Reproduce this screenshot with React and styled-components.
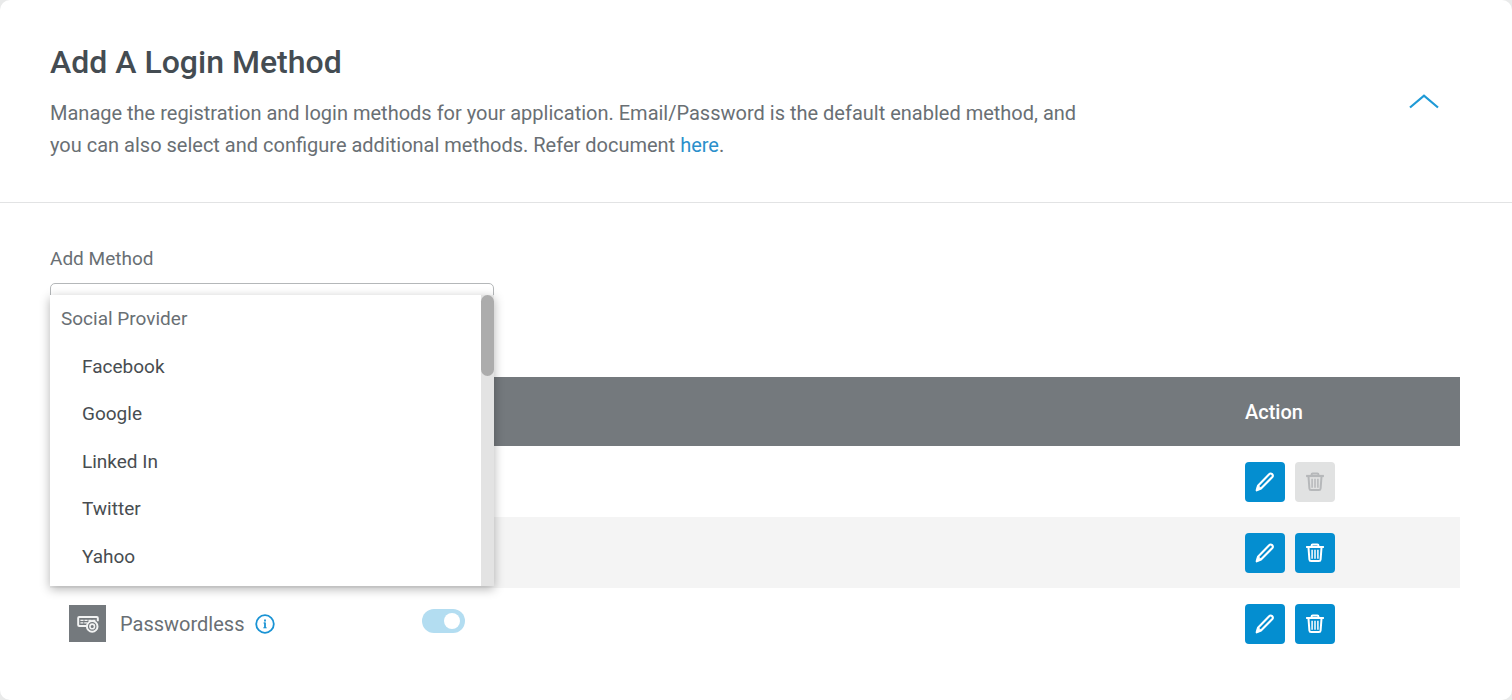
import React, { useState } from 'react';
import styled, { createGlobalStyle } from 'styled-components';

const GlobalStyle = createGlobalStyle`
  *, *::before, *::after { box-sizing: border-box; }
  body {
    margin: 0;
    background: #e9eaea;
    color: #696f74;
    font-family: Roboto, "Liberation Sans", sans-serif;
    font-size: 20px;
    line-height: 32px;
  }
  button, select { font: inherit; color: inherit; }
`;

const Card = styled.main`
  min-height: 100vh;
  background: #fff;
  border-radius: 10px;
  overflow: hidden;
`;

const CardHeader = styled.header`
  display: flex;
  justify-content: space-between;
  align-items: center;
  padding: 42px 72px 41px 50px;
  border-bottom: 1px solid #e2e3e4;
`;

const Intro = styled.div`
  max-width: 1050px;
`;

const Title = styled.h1`
  margin: 0 0 15px;
  color: #444c52;
  font-size: 32px;
  font-weight: 500;
  line-height: 40px;
`;

const Description = styled.p`
  margin: 0;
`;

const DocLink = styled.a`
  color: #2b8fcb;
  text-decoration: none;
`;

const CollapseButton = styled.button`
  display: flex;
  padding: 0;
  border: 0;
  background: none;
  color: #1f9ad6;
  cursor: pointer;
`;

const CardBody = styled.section`
  padding: 44px 52px 40px 50px;
`;

const Field = styled.div`
  position: relative;
  width: 444px;
  margin-bottom: 46px;
`;

const FieldLabel = styled.label`
  display: block;
  margin-bottom: 12px;
  font-size: 19px;
  line-height: 24px;
`;

const MethodSelect = styled.select`
  display: block;
  width: 100%;
  height: 48px;
  padding: 0 12px;
  border: 1px solid #b4b7b9;
  border-radius: 5px;
  background: #fff;
  appearance: none;
`;

const Menu = styled.div`
  position: absolute;
  top: 48px;
  left: 0;
  right: 0;
  display: flex;
  height: 291px;
  background: #fff;
  box-shadow: 0 3px 10px rgba(0, 0, 0, 0.3);
`;

const MenuList = styled.div`
  flex: 1;
  display: flex;
  flex-direction: column;
  justify-content: space-between;
  padding: 12px 11px 17px;
  font-size: 19px;
  line-height: 24px;
`;

const MenuGroup = styled.div`
  color: #696f74;
`;

const MenuOption = styled.button`
  padding: 0 0 0 21px;
  border: 0;
  background: none;
  color: #484d51;
  text-align: left;
  cursor: pointer;
`;

const ScrollTrack = styled.div`
  width: 13px;
  background: #e3e3e3;
`;

const ScrollThumb = styled.div`
  height: 81px;
  border-radius: 7px;
  background: #acacac;
`;

const MethodTable = styled.table`
  width: 100%;
  table-layout: fixed;
  border-collapse: collapse;
`;

const HeadCell = styled.th`
  width: ${(p) => p.$width || 'auto'};
  height: 69px;
  padding: 0;
  background: #74797d;
  color: #fff;
  font-weight: 500;
  text-align: left;
`;

const Row = styled.tr`
  height: 71px;
  background: ${(p) => (p.$shaded ? '#f4f4f4' : '#fff')};
`;

const Cell = styled.td`
  padding: 0;
`;

const MethodName = styled.div`
  display: flex;
  align-items: center;
  padding-left: 19px;
`;

const MethodIcon = styled.span`
  display: flex;
  align-items: center;
  justify-content: center;
  width: 37px;
  height: 37px;
  margin-right: 14px;
  background: #74797d;
`;

const InfoButton = styled.button`
  display: flex;
  margin-left: 11px;
  padding: 0;
  border: 0;
  background: none;
  color: #1a93d4;
`;

const Toggle = styled.input`
  appearance: none;
  display: flex;
  justify-content: flex-end;
  align-items: center;
  width: 43px;
  height: 24px;
  margin: 0 0 6px;
  padding: 0 5px;
  border-radius: 12px;
  background: #b3ddf1;

  &::before {
    content: "";
    width: 16px;
    height: 16px;
    border-radius: 50%;
    background: #fff;
  }
`;

const Actions = styled.div`
  display: flex;
  gap: 10px;
`;

const ActionButton = styled.button`
  display: flex;
  align-items: center;
  justify-content: center;
  width: 40px;
  height: 40px;
  padding: 0;
  border: 0;
  border-radius: 4px;
  background: #048ed0;
  color: #fff;
  cursor: pointer;

  &:disabled {
    background: #e1e2e2;
    color: #b6b8ba;
    cursor: default;
  }
`;

const ChevronIcon = () => (
  <svg width="32" height="16" viewBox="0 0 32 16" fill="none" stroke="currentColor" strokeWidth="2.2">
    <path d="M2 13.5 16 1.6l14 11.9" />
  </svg>
);

const PencilIcon = () => (
  <svg width="20" height="20" viewBox="0 0 20 20" fill="none" stroke="currentColor" strokeWidth="2.1" strokeLinejoin="round">
    <path d="M1.7 18.3 3 13.7 13.9 2.4c1-1 2.3-1.1 3.2-.3.9.9.9 2.2 0 3.2L6 16.5Z" />
    <path d="M1.7 18.3 2.6 14.6l2.6 2.4Z" fill="currentColor" strokeWidth="1" />
    <path d="m3 13.7 3 2.8" strokeWidth="1.2" />
  </svg>
);

const TrashIcon = () => (
  <svg width="20" height="20" viewBox="0 0 20 20" fill="none" stroke="currentColor" strokeWidth="2" strokeLinejoin="round">
    <path d="M1.1 4h17.8" strokeWidth="2.2" />
    <path d="M6.6 3.8V2.5q0-1 1-1h4.8q1 0 1 1v1.3" />
    <path d="M3.5 4.6 4.4 16.5q.1 1.6 1.7 1.6h7.8q1.6 0 1.7-1.6l.9-11.9" />
    <path d="M7.1 6.8v9M10 6.8v9M12.9 6.8v9" strokeWidth="1.5" />
  </svg>
);

const PasswordlessIcon = () => (
  <svg width="22" height="18" viewBox="0 0 22 18" fill="none" stroke="#f2f3f3" strokeWidth="2">
    <path d="M9.5 11.1H2.2q-1 0-1-1V3q0-1 1-1h17.6q1 0 1 1v3.2" />
    <path d="M3.4 5.4h15" strokeWidth="1.3" strokeDasharray="3.2 .8" />
    <path d="M3.4 7.8h7" strokeWidth="1.2" strokeDasharray="3 .8" />
    <circle cx="15.2" cy="11.4" r="5.3" fill="#74797d" />
    <circle cx="15.2" cy="11.4" r="2.3" strokeWidth="1.6" />
  </svg>
);

const InfoIcon = () => (
  <svg width="20" height="20" viewBox="0 0 20 20" fill="none" stroke="currentColor" strokeWidth="1.8">
    <circle cx="10" cy="10" r="8.8" />
    <path d="M10 8.6V14" />
    <path d="M10 5.6v1.8" />
    <path d="M8.5 9h1.5M8.3 13.8h3.4" strokeWidth="1" />
  </svg>
);

const PROVIDERS = ['Facebook', 'Google', 'Linked In', 'Twitter', 'Yahoo'];

function RowActions({ locked }) {
  return (
    <Actions>
      <ActionButton type="button" aria-label="Edit">
        <PencilIcon />
      </ActionButton>
      <ActionButton type="button" aria-label="Delete" disabled={locked}>
        <TrashIcon />
      </ActionButton>
    </Actions>
  );
}

export default function App() {
  const [method, setMethod] = useState('');
  return (
    <>
      <GlobalStyle />
      <Card>
        <CardHeader>
          <Intro>
            <Title>Add A Login Method</Title>
            <Description>
              Manage the registration and login methods for your application. Email/Password is the
              default enabled method, and you can also select and configure additional methods. Refer
              document <DocLink href="#docs">here</DocLink>.
            </Description>
          </Intro>
          <CollapseButton type="button" aria-label="Collapse section">
            <ChevronIcon />
          </CollapseButton>
        </CardHeader>
        <CardBody>
          <Field>
            <FieldLabel htmlFor="method">Add Method</FieldLabel>
            <MethodSelect id="method" value={method} onChange={(e) => setMethod(e.target.value)}>
              <option value="" />
              {PROVIDERS.map((name) => (
                <option key={name} value={name}>{name}</option>
              ))}
            </MethodSelect>
            <Menu>
              <MenuList role="listbox" aria-label="Add Method">
                <MenuGroup>Social Provider</MenuGroup>
                {PROVIDERS.map((name) => (
                  <MenuOption
                    key={name}
                    type="button"
                    role="option"
                    aria-selected={method === name}
                    onClick={() => setMethod(name)}
                  >
                    {name}
                  </MenuOption>
                ))}
              </MenuList>
              <ScrollTrack>
                <ScrollThumb />
              </ScrollTrack>
            </Menu>
          </Field>
          <MethodTable>
            <thead>
              <tr>
                <HeadCell $width="372px" />
                <HeadCell />
                <HeadCell $width="215px">Action</HeadCell>
              </tr>
            </thead>
            <tbody>
              <Row>
                <Cell />
                <Cell />
                <Cell><RowActions locked /></Cell>
              </Row>
              <Row $shaded>
                <Cell />
                <Cell />
                <Cell><RowActions /></Cell>
              </Row>
              <Row>
                <Cell>
                  <MethodName>
                    <MethodIcon><PasswordlessIcon /></MethodIcon>
                    <label htmlFor="passwordless">Passwordless</label>
                    <InfoButton type="button" aria-label="About passwordless login">
                      <InfoIcon />
                    </InfoButton>
                  </MethodName>
                </Cell>
                <Cell><Toggle id="passwordless" type="checkbox" defaultChecked /></Cell>
                <Cell><RowActions /></Cell>
              </Row>
            </tbody>
          </MethodTable>
        </CardBody>
      </Card>
    </>
  );
}
